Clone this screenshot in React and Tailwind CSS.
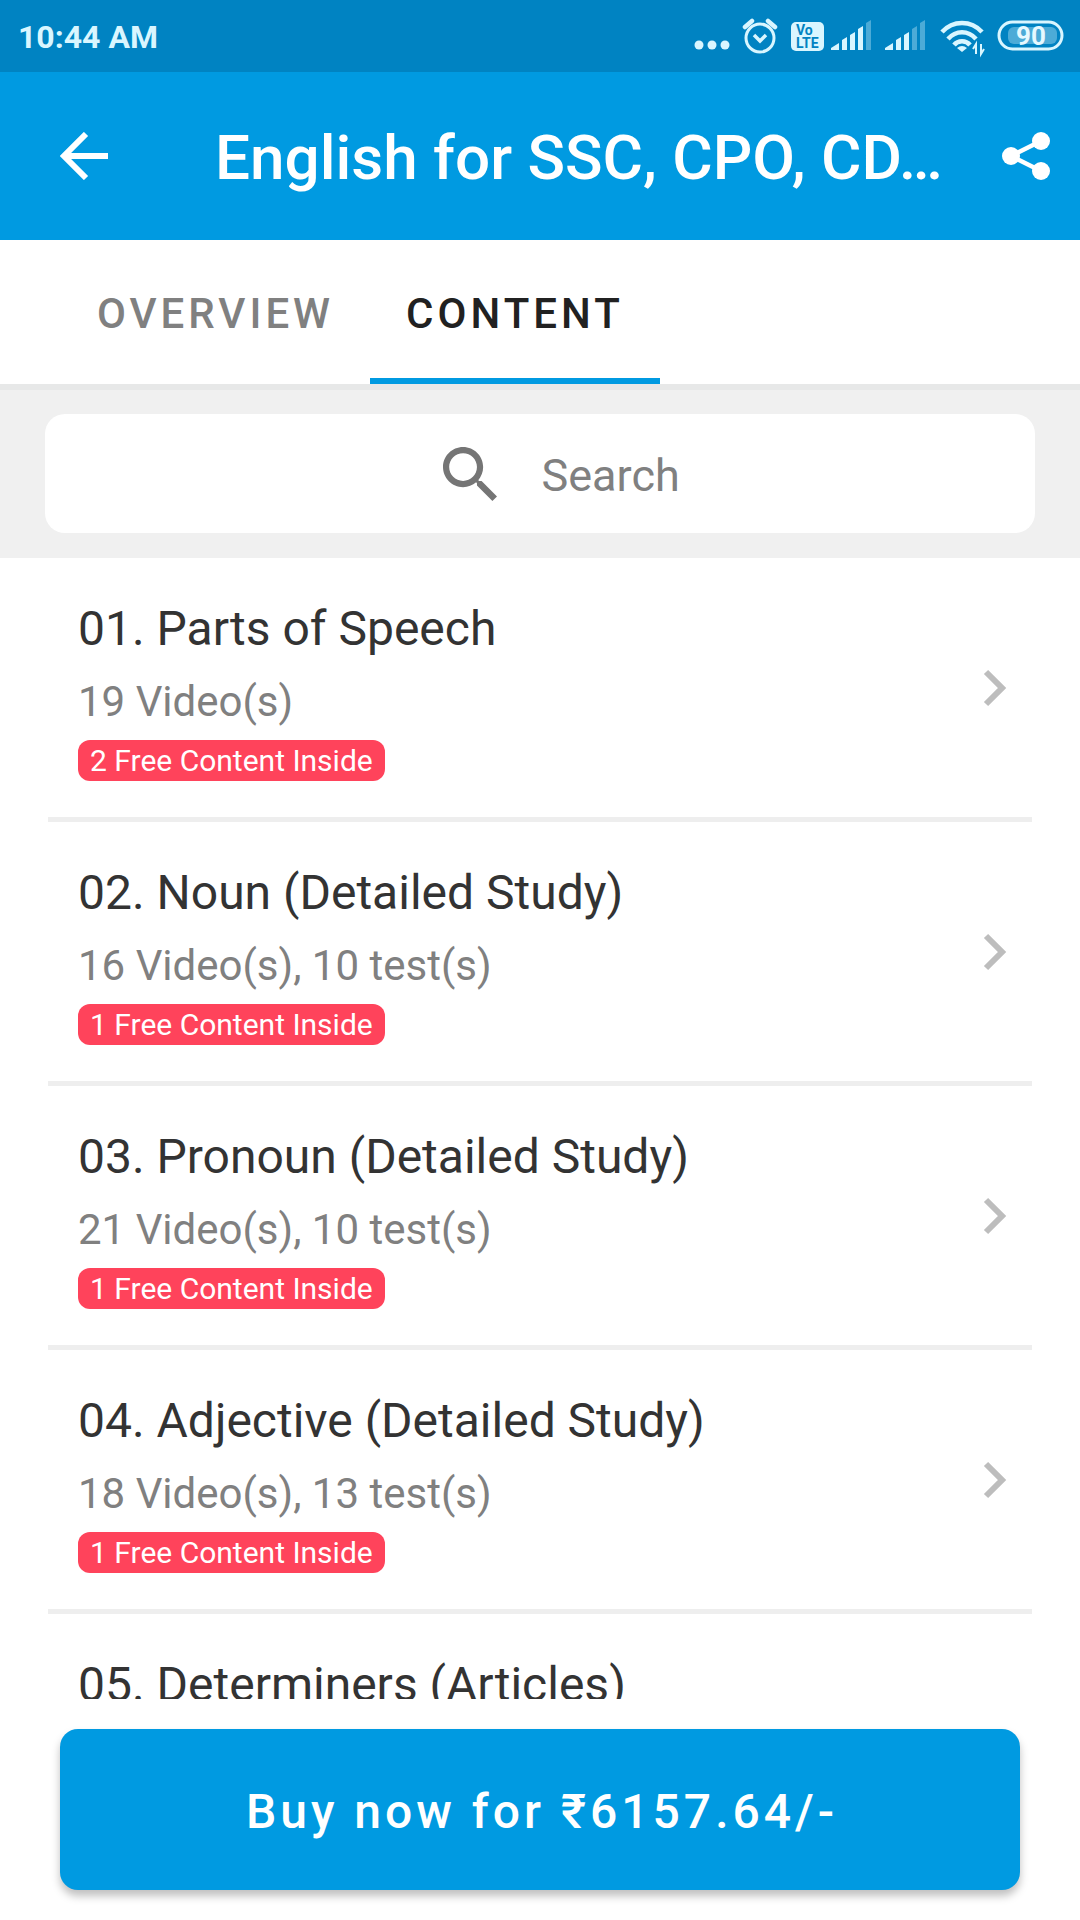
import React, { useState } from 'react';

const chapters = [
  { id: 1, title: '01. Parts of Speech', meta: '19 Video(s)', badge: '2 Free Content Inside' },
  { id: 2, title: '02. Noun (Detailed Study)', meta: '16 Video(s), 10 test(s)', badge: '1 Free Content Inside' },
  { id: 3, title: '03. Pronoun (Detailed Study)', meta: '21 Video(s), 10 test(s)', badge: '1 Free Content Inside' },
  { id: 4, title: '04. Adjective (Detailed Study)', meta: '18 Video(s), 13 test(s)', badge: '1 Free Content Inside' },
  { id: 5, title: '05. Determiners (Articles)', meta: null, badge: null },
];

const tabs = ['OVERVIEW', 'CONTENT'];

const StatusIcons = () => (
  <svg width="370" height="44" viewBox="0 2 370 44" fill="none" className="text-[#d9f6ff]" aria-hidden="true">
    <g fill="currentColor">
      <circle cx="5" cy="33" r="4.5" />
      <circle cx="18" cy="33" r="4.5" />
      <circle cx="31" cy="33" r="4.5" />
    </g>
    <g stroke="currentColor" strokeWidth="3">
      <circle cx="66" cy="26" r="14" />
      <path d="M60 23l6 6 6-6" strokeWidth="3.5" />
      <path d="M51 15l7-6M74 9l7 6" strokeWidth="4.5" strokeLinecap="round" />
    </g>
    <rect x="97" y="10" width="33" height="29" rx="5" fill="currentColor" />
    <text x="102" y="23" className="fill-[#0083c2] font-bold text-[14px]">Vo</text>
    <text x="102" y="36" className="fill-[#0083c2] font-bold text-[14px]">LTE</text>
    <g fill="currentColor">
      <path d="M137 38v-2l8-5v7zM148 38V28l5-3v13zM156 38V23l5-3v18zM164 38V17l5-3v24z" />
      <path d="M172 38V11l5-3v30z" opacity=".35" />
      <path d="M191 38v-2l8-5v7zM202 38V28l5-3v13zM210 38V23l5-3v18z" />
      <path d="M218 38V17l5-3v24zM226 38V11l5-3v30z" opacity=".35" />
    </g>
    <g stroke="currentColor" strokeWidth="4.5">
      <path d="M248 20c11-12 29-12 40 0M254 27c8-9 20-9 28 0M260 33c4-5 12-5 16 0" />
    </g>
    <path d="M263 36q5-4 10 0l-5 4z" fill="currentColor" />
    <path d="M282 42V32l-3 5M287 32v10l3-5" stroke="currentColor" strokeWidth="2" />
    <rect x="305" y="10" width="63" height="27" rx="13.5" stroke="currentColor" strokeWidth="3" />
    <rect x="314" y="15" width="49" height="17" rx="6" fill="currentColor" opacity=".35" />
    <text x="322" y="33" className="fill-[#e6f9ff] font-bold text-[26px]">90</text>
  </svg>
);

const ChapterRow = ({ chapter }) => (
  <li className="border-b-5 border-[#eeeeee]">
    <button type="button" className="flex min-h-[206px] w-full items-center justify-between pr-[25px] pl-[30px] text-left">
      <span className="flex flex-col items-start self-start pt-[41px] pb-9">
        <span className="text-[48px] leading-[60px] text-[#333333]">{chapter.title}</span>
        {chapter.meta && (
          <span className="mt-4 text-[42px] leading-[54px] text-[#808080]">{chapter.meta}</span>
        )}
        {chapter.badge && (
          <span className="mt-[11px] rounded-xl bg-[#ff435b] px-3 text-[30px] leading-[41px] text-white">
            {chapter.badge}
          </span>
        )}
      </span>
      <svg width="24" height="38" viewBox="0 0 24 38" fill="none" stroke="#bdbdbd" strokeWidth="6" aria-hidden="true">
        <path d="M3 3l16 16L3 35" />
      </svg>
    </button>
  </li>
);

const App = () => {
  const [activeTab, setActiveTab] = useState('CONTENT');
  const [query, setQuery] = useState('');

  return (
    <div className="flex h-screen flex-col overflow-hidden bg-white font-[Roboto,'Noto_Sans',sans-serif]">
      <div className="flex h-[72px] shrink-0 items-center justify-between bg-[#0083c2] pr-4 pl-[18px]">
        <span className="pt-0.5 text-[32px] font-bold text-[#d9f6ff]">10:44 AM</span>
        <StatusIcons />
      </div>

      <header className="flex h-[168px] shrink-0 items-center bg-[#009ae1] pr-[30px] pl-[60px] text-white">
        <button type="button" aria-label="Back">
          <svg width="48" height="48" viewBox="0 0 48 48" fill="none" stroke="currentColor" strokeWidth="6" aria-hidden="true">
            <path d="M48 24H5M26 2L4 24l22 22" />
          </svg>
        </button>
        <h1 className="ml-[107px] flex-1 pt-1 text-[62px] leading-[72px] font-medium">English for SSC, CPO, CD…</h1>
        <button type="button" aria-label="Share">
          <svg width="48" height="48" viewBox="0 0 48 48" fill="currentColor" aria-hidden="true">
            <path d="M9 24L39 9M9 24l30 15" stroke="currentColor" strokeWidth="4.5" />
            <circle cx="9" cy="24" r="9" />
            <circle cx="39" cy="9" r="9" />
            <circle cx="39" cy="39" r="9" />
          </svg>
        </button>
      </header>

      <nav className="flex h-[150px] shrink-0 border-b-6 border-[#e7e8e8] pl-[61px]">
        {tabs.map((tab) => (
          <button
            key={tab}
            type="button"
            onClick={() => setActiveTab(tab)}
            className={`border-b-6 px-9 pt-2 text-[42px] font-medium tracking-[4px] ${
              tab === activeTab ? 'border-[#009ae1] text-[#212121]' : 'border-transparent text-[#808080]'
            }`}
          >
            {tab}
          </button>
        ))}
      </nav>

      <div className="shrink-0 bg-[#f0f0f0] px-[45px] pt-6 pb-[25px]">
        <label className="flex h-[119px] items-center justify-center gap-[45px] rounded-[20px] bg-white pl-11">
          <svg width="54" height="54" viewBox="3 3 17.49 17.49" fill="#757575" aria-hidden="true">
            <path d="M15.5 14h-.79l-.28-.27C15.41 12.59 16 11.11 16 9.5 16 5.91 13.09 3 9.5 3S3 5.91 3 9.5 5.91 16 9.5 16c1.61 0 3.09-.59 4.23-1.57l.27.28v.79l5 4.99L20.49 19l-4.99-5zm-6 0C7.01 14 5 11.99 5 9.5S7.01 5 9.5 5 14 7.01 14 9.5 11.99 14 9.5 14z" />
          </svg>
          <input
            type="text"
            aria-label="Search"
            placeholder="Search"
            value={query}
            onChange={(e) => setQuery(e.target.value)}
            className="w-[140px] pt-1 text-[45px] text-[#333333] outline-none placeholder:text-[#808080]"
          />
        </label>
      </div>

      <ul className="min-h-0 flex-1 overflow-hidden px-12">
        {chapters.map((chapter) => (
          <ChapterRow key={chapter.id} chapter={chapter} />
        ))}
      </ul>

      <footer className="shrink-0 px-[60px] py-[30px]">
        <button
          type="button"
          className="h-[161px] w-full rounded-[18px] bg-[#009ae1] pt-1 pl-1 text-[48px] font-medium tracking-[4px] text-white shadow-[0_6px_8px_rgba(0,0,0,0.25)]"
        >
          Buy now for ₹6157.64/-
        </button>
      </footer>
    </div>
  );
};

export default App;
